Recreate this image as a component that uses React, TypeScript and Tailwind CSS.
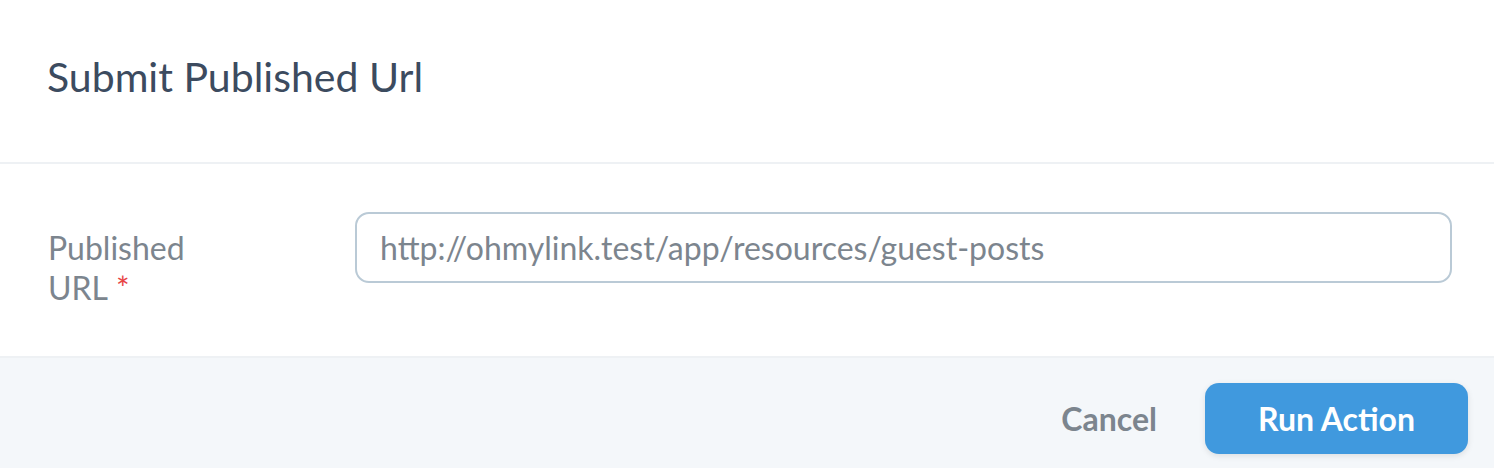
export default function App() {
  return (
    <div className="min-h-screen w-full bg-white font-['Lato','Noto_Sans',sans-serif]">
      <div className="flex h-[162px] items-center px-[47px] pb-[10px]">
        <h2 className="text-[41px] font-normal leading-none text-[#3c4b5f]">Submit Published Url</h2>
      </div>
      <div className="flex border-t-2 border-[#eef1f4] py-[48px]">
        <div className="w-[355px] shrink-0 pl-[48px] pt-[16px]">
          <label className="flex flex-col text-[32px] leading-[40px] text-[#7c858e]">
            <span>Published</span>
            <span className="flex gap-[8px]">
              <span>URL</span>
              <span className="text-[#e74444]">*</span>
            </span>
          </label>
        </div>
        <div className="flex-1 pr-[42px]">
          <input
            readOnly
            value="http://ohmylink.test/app/resources/guest-posts"
            className="h-[71px] w-full rounded-[14px] border-2 border-[#bacad6] bg-white px-[23px] text-[32px] text-[#7c858e] outline-none"
          />
        </div>
      </div>
      <div className="flex h-[114px] items-start justify-end gap-[48px] border-t-2 border-[#eef1f4] bg-[#f4f7fa] px-[26px] pt-[25px]">
        <button className="h-[71px] text-[32px] font-bold text-[#7c858e]">Cancel</button>
        <button className="h-[71px] w-[263px] rounded-[14px] bg-[#4099de] text-[32px] font-bold text-white shadow-[0_2px_6px_rgba(0,0,0,0.1)]">
          Run Action
        </button>
      </div>
    </div>
  );
}
